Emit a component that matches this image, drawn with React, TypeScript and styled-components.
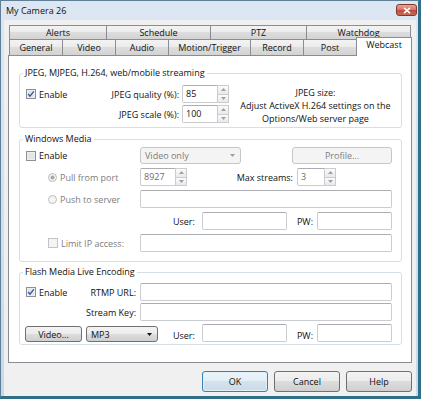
import React from 'react';
import styled, { createGlobalStyle, css } from 'styled-components';

const GlobalStyle = createGlobalStyle`
  html, body { margin: 0; padding: 0; background: #2f6f88; }
  body {
    font-family: "Open Sans", "Noto Sans", sans-serif;
    font-size: 9px;
    color: #111;
  }
  * { box-sizing: border-box; }
`;

const Window = styled.div`
  width: 421px;
  height: 399px;
  display: flex;
  flex-direction: column;
  background: linear-gradient(#dce7f3, #c9d9ea);
  border-top: 1px solid #5f7f96;
  border-left: 1px solid #5f7f96;
  border-right: 3px solid #2f6f88;
  border-bottom: 3px solid #2f6f88;
  padding: 0 2px 0 3px;
`;

const TitleBar = styled.div`
  height: 19px;
  display: flex;
  justify-content: space-between;
  align-items: flex-start;
  padding-left: 2px;
`;

const Title = styled.span`
  line-height: 13px;
  margin-top: 3px;
  color: #111;
`;

const CloseBtn = styled.div`
  width: 21px;
  height: 12px;
  margin-top: 3px;
  margin-right: -1px;
  border: 1px solid #84372d;
  border-radius: 3px;
  background: linear-gradient(#e6a697, #d4786a 45%, #c0473a 50%, #cb6b5a);
  display: flex;
  align-items: center;
  justify-content: center;
`;

const Client = styled.div`
  flex: 1;
  display: flex;
  flex-direction: column;
  background: #f0f0f0;
  padding: 5px 4px 4px;
`;

const TabRow = styled.div<{ $second?: boolean }>`
  display: flex;
  margin-left: 1px;
  ${(p) => p.$second && css`margin-top: -1px;`}
`;

const Tab = styled.div<{ $w: number; $h: number; $active?: boolean }>`
  width: ${(p) => p.$w}px;
  height: ${(p) => p.$h}px;
  margin-left: -1px;
  border: 1px solid #898c95;
  background: linear-gradient(#f3f3f3, #ebebeb 50%, #dddddd 50%, #d3d3d3);
  text-align: center;
  line-height: ${(p) => p.$h - 2}px;
  color: #111;
  &:first-child { margin-left: 0; }
  ${(p) =>
    p.$active &&
    css`
      height: ${p.$h + 2}px;
      margin-top: -2px;
      background: #fff;
      border-bottom: none;
      position: relative;
      z-index: 1;
      line-height: ${p.$h - 4}px;
    `}
`;

const Panel = styled.div`
  flex: 1;
  margin-top: -1px;
  background: #fff;
  border: 1px solid #898c95;
  padding: 10px 9px 0 10px;
  display: flex;
  flex-direction: column;
`;

const Group = styled.fieldset<{ $mt?: number; $pt: number; $pb: number }>`
  margin: ${(p) => p.$mt ?? 0}px 0 0;
  min-width: 0;
  border: 1px solid #d5dfe5;
  border-radius: 3px;
  padding: ${(p) => p.$pt}px 9px ${(p) => p.$pb}px 6px;
`;

const Legend = styled.legend`
  margin-left: -3px;
  padding: 0 2px;
  line-height: 14px;
  color: #111;
`;

const QualityGrid = styled.div`
  display: grid;
  grid-template-columns: 64px 92px 47px 1fr;
  grid-template-rows: 18px 18px;
  row-gap: 2px;
  align-items: center;
`;

const FieldLabel = styled.span<{ $disabled?: boolean; $gap?: number }>`
  text-align: right;
  white-space: nowrap;
  color: ${(p) => (p.$disabled ? '#7d7d7d' : '#111')};
  margin-right: ${(p) => p.$gap ?? 3}px;
`;

const Note = styled.div`
  grid-row: 1 / span 2;
  grid-column: 4;
  align-self: start;
  text-align: center;
  line-height: 13px;
  margin-top: 1px;
  padding-left: 10px;
`;

const FormRow = styled.div<{ $h?: number; $mt?: number }>`
  display: grid;
  grid-template-columns: 114px 1fr;
  align-items: center;
  height: ${(p) => p.$h ?? 18}px;
  margin-top: ${(p) => p.$mt ?? 0}px;
`;

const LeftCell = styled.div<{ $indent?: number }>`
  display: flex;
  align-items: center;
  justify-content: space-between;
  padding-left: ${(p) => p.$indent ?? 0}px;
  padding-right: 4px;
`;

const Controls = styled.div<{ $justify?: string }>`
  display: flex;
  align-items: center;
  justify-content: ${(p) => p.$justify ?? 'flex-start'};
  height: 100%;
`;

const PortControls = styled.div`
  display: grid;
  grid-template-columns: 47px 110px 39px;
  align-items: center;
  height: 100%;
`;

const BottomRow = styled.div`
  display: flex;
  align-items: flex-end;
  height: 18px;
  margin-top: 3px;
  margin-left: -1px;
`;

const CheckLabel = styled.label<{ $disabled?: boolean }>`
  display: inline-flex;
  align-items: center;
  gap: 3px;
  white-space: nowrap;
  color: ${(p) => (p.$disabled ? '#7d7d7d' : '#111')};
`;

const TextBox = styled.input<{ $w?: number }>`
  ${(p) => (p.$w ? css`width: ${p.$w}px;` : css`flex: 1;`)}
  min-width: 0;
  height: 18px;
  margin: 0;
  padding: 0 3px;
  font: inherit;
  color: #111;
  background: #fff;
  border: 1px solid #c9ccd1;
  border-top-color: #abadb3;
  border-radius: 2px;
  outline: none;
`;

const SpinWrap = styled.div<{ $w: number; $disabled?: boolean }>`
  width: ${(p) => p.$w}px;
  height: 18px;
  display: flex;
  color: ${(p) => (p.$disabled ? '#6d6d6d' : '#111')};
`;

const SpinValue = styled.span`
  flex: 1;
  padding-left: 3px;
  line-height: 16px;
  background: #fff;
  border: 1px solid #c9ccd1;
  border-top-color: #abadb3;
  border-radius: 2px 0 0 2px;
`;

const SpinButtons = styled.div`
  width: 11px;
  display: flex;
  flex-direction: column;
`;

const SpinHalf = styled.div`
  flex: 1;
  display: flex;
  align-items: center;
  justify-content: center;
  border: 1px solid #c9ccd1;
  border-left: none;
  background: linear-gradient(#fbfbfb, #e9e9e9);
  & + & { border-top: none; }
`;

const Combo = styled.div<{ $w: number; $disabled?: boolean }>`
  width: ${(p) => p.$w}px;
  height: 17px;
  display: flex;
  align-items: center;
  justify-content: space-between;
  padding: 0 5px 0 4px;
  border-radius: 3px;
  ${(p) =>
    p.$disabled
      ? css`
          background: #f4f4f4;
          border: 1px solid #c3c6ca;
          color: #7d7d7d;
        `
      : css`
          height: 16px;
          background: linear-gradient(#f3f3f3, #ebebeb 50%, #dddddd 50%, #cfcfcf);
          border: 1px solid #707070;
          color: #111;
        `}
`;

const Button = styled.div<{ $w: number; $h?: number; $variant?: 'default' | 'primary' | 'disabled' }>`
  width: ${(p) => p.$w}px;
  height: ${(p) => p.$h ?? 21}px;
  display: flex;
  align-items: center;
  justify-content: center;
  border-radius: 3px;
  border: 1px solid #707070;
  background: linear-gradient(#f3f3f3, #ebebeb 50%, #dddddd 50%, #cfcfcf);
  color: #111;
  ${(p) =>
    p.$variant === 'primary' &&
    css`
      border-color: #3c7fb1;
      background: linear-gradient(#eef5fa, #e2edf5 50%, #d3e2ed 50%, #cadbe8);
      box-shadow: inset 0 0 0 1px #dff0fb;
    `}
  ${(p) =>
    p.$variant === 'disabled' &&
    css`
      border-color: #c3c6ca;
      background: #f4f4f4;
      color: #7d7d7d;
    `}
`;

const DialogButtons = styled.div`
  display: flex;
  justify-content: flex-end;
  gap: 6px;
  margin-top: 8px;
`;

const Arrow = ({ up, color = '#6d6d6d' }: { up?: boolean; color?: string }) => (
  <svg width="5" height="3" viewBox="0 0 5 3">
    <path d={up ? 'M0 3 L2.5 0 L5 3 Z' : 'M0 0 L5 0 L2.5 3 Z'} fill={color} />
  </svg>
);

const CheckIcon = ({ checked, disabled }: { checked?: boolean; disabled?: boolean }) => (
  <svg width="10" height="10" viewBox="0 0 10 10">
    <rect x="0.5" y="0.5" width="9" height="9" fill="#f4f4f4" stroke={disabled ? '#c4c4c4' : '#8e8f8f'} />
    <rect x="1.5" y="1.5" width="7" height="7" fill={disabled ? '#f4f4f4' : '#e2e5e9'} />
    {checked && (
      <path d="M2.2 5 L4 7.2 L7.8 2.4" fill="none" stroke="#3a5c9e" strokeWidth="1.4" />
    )}
  </svg>
);

const RadioIcon = ({ checked }: { checked?: boolean }) => (
  <svg width="9" height="9" viewBox="0 0 9 9">
    <circle cx="4.5" cy="4.5" r="4" fill="#f4f4f4" stroke="#bcbcbc" />
    {checked && <circle cx="4.5" cy="4.5" r="2" fill="#a8a8a8" />}
  </svg>
);

const Check = ({ label, checked, disabled }: { label: string; checked?: boolean; disabled?: boolean }) => (
  <CheckLabel $disabled={disabled}>
    <CheckIcon checked={checked} disabled={disabled} />
    {label}
  </CheckLabel>
);

const Radio = ({ label, checked }: { label: string; checked?: boolean }) => (
  <CheckLabel $disabled>
    <RadioIcon checked={checked} />
    {label}
  </CheckLabel>
);

const Spin = ({ value, w, disabled }: { value: string; w: number; disabled?: boolean }) => (
  <SpinWrap $w={w} $disabled={disabled}>
    <SpinValue>{value}</SpinValue>
    <SpinButtons>
      <SpinHalf>
        <Arrow up color="#a0a0a0" />
      </SpinHalf>
      <SpinHalf>
        <Arrow color="#a0a0a0" />
      </SpinHalf>
    </SpinButtons>
  </SpinWrap>
);

const UserPw = () => (
  <>
    <FieldLabel $gap={7} style={{ marginLeft: 'auto' }}>User:</FieldLabel>
    <TextBox $w={85} readOnly />
    <FieldLabel $gap={4} style={{ marginLeft: 10 }}>PW:</FieldLabel>
    <TextBox $w={75} readOnly />
  </>
);

const topTabs = [
  { label: 'Alerts', w: 98 },
  { label: 'Schedule', w: 105 },
  { label: 'PTZ', w: 97 },
  { label: 'Watchdog', w: 105 },
];

const bottomTabs = [
  { label: 'General', w: 54 },
  { label: 'Video', w: 54 },
  { label: 'Audio', w: 54 },
  { label: 'Motion/Trigger', w: 83 },
  { label: 'Record', w: 54 },
  { label: 'Post', w: 54 },
  { label: 'Webcast', w: 56, active: true },
];

export default function App() {
  return (
    <>
      <GlobalStyle />
      <Window>
        <TitleBar>
          <Title>My Camera 26</Title>
          <CloseBtn>
            <svg width="8" height="7" viewBox="0 0 8 7">
              <path d="M1 0.8 L7 6.2 M7 0.8 L1 6.2" stroke="#fff" strokeWidth="1.6" />
            </svg>
          </CloseBtn>
        </TitleBar>
        <Client>
          <TabRow>
            {topTabs.map((t) => (
              <Tab key={t.label} $w={t.w} $h={15}>
                {t.label}
              </Tab>
            ))}
          </TabRow>
          <TabRow $second>
            {bottomTabs.map((t) => (
              <Tab key={t.label} $w={t.w} $h={17} $active={t.active}>
                {t.label}
              </Tab>
            ))}
          </TabRow>
          <Panel>
            <Group $pt={5} $pb={4}>
              <Legend>JPEG, MJPEG, H.264, web/mobile streaming</Legend>
              <QualityGrid>
                <Check label="Enable" checked />
                <FieldLabel>JPEG quality (%):</FieldLabel>
                <Spin value="85" w={47} />
                <Note>
                  JPEG size:
                  <br />
                  Adjust ActiveX H.264 settings on the
                  <br />
                  Options/Web server page
                </Note>
                <span />
                <FieldLabel>JPEG scale (%):</FieldLabel>
                <Spin value="100" w={47} />
              </QualityGrid>
            </Group>

            <Group $mt={4} $pt={1} $pb={9}>
              <Legend>Windows Media</Legend>
              <FormRow $h={17}>
                <LeftCell>
                  <Check label="Enable" />
                </LeftCell>
                <Controls $justify="space-between">
                  <Combo $w={101} $disabled>
                    Video only
                    <Arrow color="#a0a0a0" />
                  </Combo>
                  <Button $w={100} $h={17} $variant="disabled">
                    Profile...
                  </Button>
                </Controls>
              </FormRow>
              <FormRow $mt={4}>
                <LeftCell $indent={22}>
                  <Radio label="Pull from port" checked />
                </LeftCell>
                <PortControls>
                  <Spin value="8927" w={47} disabled />
                  <FieldLabel $gap={4}>Max streams:</FieldLabel>
                  <Spin value="3" w={39} disabled />
                </PortControls>
              </FormRow>
              <FormRow $mt={4}>
                <LeftCell $indent={22}>
                  <Radio label="Push to server" />
                </LeftCell>
                <Controls>
                  <TextBox readOnly />
                </Controls>
              </FormRow>
              <FormRow $mt={4}>
                <span />
                <Controls>
                  <UserPw />
                </Controls>
              </FormRow>
              <FormRow $mt={4}>
                <LeftCell $indent={22}>
                  <Check label="Limit IP access:" disabled />
                </LeftCell>
                <Controls>
                  <TextBox readOnly />
                </Controls>
              </FormRow>
            </Group>

            <Group $mt={3} $pt={4} $pb={2}>
              <Legend>Flash Media Live Encoding</Legend>
              <FormRow>
                <LeftCell>
                  <Check label="Enable" checked />
                  <FieldLabel $gap={0}>RTMP URL:</FieldLabel>
                </LeftCell>
                <Controls>
                  <TextBox readOnly />
                </Controls>
              </FormRow>
              <FormRow $mt={2}>
                <LeftCell>
                  <span />
                  <FieldLabel $gap={0}>Stream Key:</FieldLabel>
                </LeftCell>
                <Controls>
                  <TextBox readOnly />
                </Controls>
              </FormRow>
              <BottomRow>
                <Button $w={57} $h={16}>
                  Video...
                </Button>
                <Combo $w={72} style={{ marginLeft: 4 }}>
                  MP3
                  <Arrow color="#111" />
                </Combo>
                <UserPw />
              </BottomRow>
            </Group>
          </Panel>
          <DialogButtons>
            <Button $w={66} $variant="primary">
              OK
            </Button>
            <Button $w={66}>Cancel</Button>
            <Button $w={66}>Help</Button>
          </DialogButtons>
        </Client>
      </Window>
    </>
  );
}
